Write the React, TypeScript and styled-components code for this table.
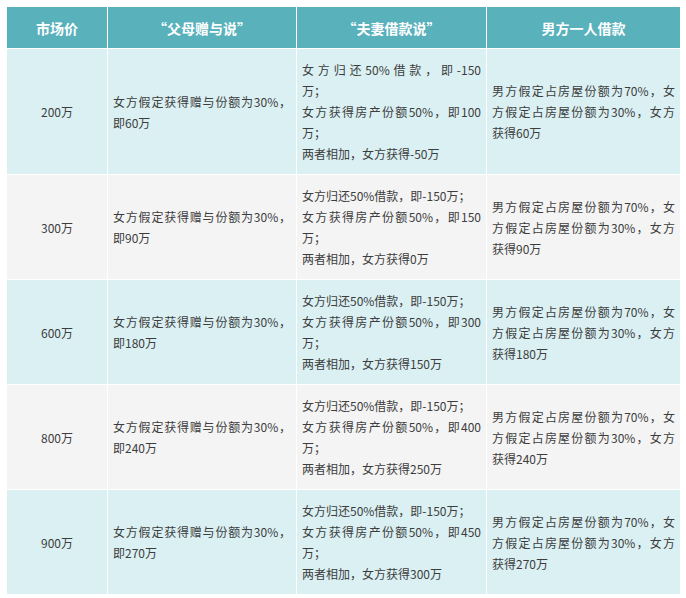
import React from "react";
import styled, { createGlobalStyle } from "styled-components";

const GlobalStyle = createGlobalStyle`
  body {
    margin: 0;
    background: #fff;
    font-family: "Noto Sans CJK SC", "Noto Sans", sans-serif;
  }
`;

const Page = styled.div`
  padding: 6px;
`;

const Table = styled.table`
  width: 674px;
  border-collapse: collapse;
  table-layout: fixed;
`;

const HeadCell = styled.th`
  height: 41px;
  padding: 0 5px;
  background: #58b1bb;
  color: #fff;
  font-size: 14px;
  font-weight: 700;
  text-align: center;
  border: 1px solid #fff;
`;

const Cell = styled.td<{ $tone: "cyan" | "gray"; $center?: boolean }>`
  padding: 10px 5px;
  background: ${(p) => (p.$tone === "cyan" ? "#daf0f3" : "#f4f4f4")};
  color: #3d3d3d;
  font-size: 12px;
  line-height: 21px;
  vertical-align: middle;
  text-align: ${(p) => (p.$center ? "center" : "left")};
  border: 1px solid #fff;
`;

const Line = styled.div<{ $fill?: boolean }>`
  white-space: nowrap;
  text-align: left;
  text-align-last: ${(p) => (p.$fill ? "justify" : "left")};
`;

type L = [string, boolean?];

interface Row {
  price: string;
  gift: L[];
  couple: L[];
  man: L[];
}

const mk = (back: string, total: string, wide: boolean): L[] =>
  wide
    ? [
        ["女方归还50%借款，即-150", true],
        ["万；"],
        [`女方获得房产份额50%，即${back}`, true],
        ["万；"],
        [`两者相加，女方获得${total}万`],
      ]
    : [
        ["女方归还50%借款，即-150万；"],
        [`女方获得房产份额50%，即${back}`, true],
        ["万；"],
        [`两者相加，女方获得${total}万`],
      ];

const rows: Row[] = [
  ["200", "60", "100", "-50"],
  ["300", "90", "150", "0"],
  ["600", "180", "300", "150"],
  ["800", "240", "400", "250"],
  ["900", "270", "450", "300"],
].map(([p, g, b, t], i) => ({
  price: `${p}万`,
  gift: [["女方假定获得赠与份额为30%，", true], [`即${g}万`]],
  couple: mk(b, t, i === 0),
  man: [
    ["男方假定占房屋份额为70%，女", true],
    ["方假定占房屋份额为30%，女方", true],
    [`获得${g}万`],
  ],
}));

const Lines = ({ items }: { items: L[] }) => (
  <>
    {items.map(([t, f], i) => (
      <Line key={i} $fill={f}>
        {t}
      </Line>
    ))}
  </>
);

export default function App() {
  return (
    <Page>
      <GlobalStyle />
      <Table>
        <colgroup>
          <col style={{ width: 101 }} />
          <col style={{ width: 189 }} />
          <col style={{ width: 190 }} />
          <col style={{ width: 194 }} />
        </colgroup>
        <thead>
          <tr>
            <HeadCell>市场价</HeadCell>
            <HeadCell>“父母赠与说”</HeadCell>
            <HeadCell>“夫妻借款说”</HeadCell>
            <HeadCell>男方一人借款</HeadCell>
          </tr>
        </thead>
        <tbody>
          {rows.map((r, i) => {
            const tone = i % 2 === 0 ? "cyan" : "gray";
            return (
              <tr key={r.price}>
                <Cell $tone={tone} $center>
                  {r.price}
                </Cell>
                <Cell $tone={tone}>
                  <Lines items={r.gift} />
                </Cell>
                <Cell $tone={tone}>
                  <Lines items={r.couple} />
                </Cell>
                <Cell $tone={tone}>
                  <Lines items={r.man} />
                </Cell>
              </tr>
            );
          })}
        </tbody>
      </Table>
    </Page>
  );
}
